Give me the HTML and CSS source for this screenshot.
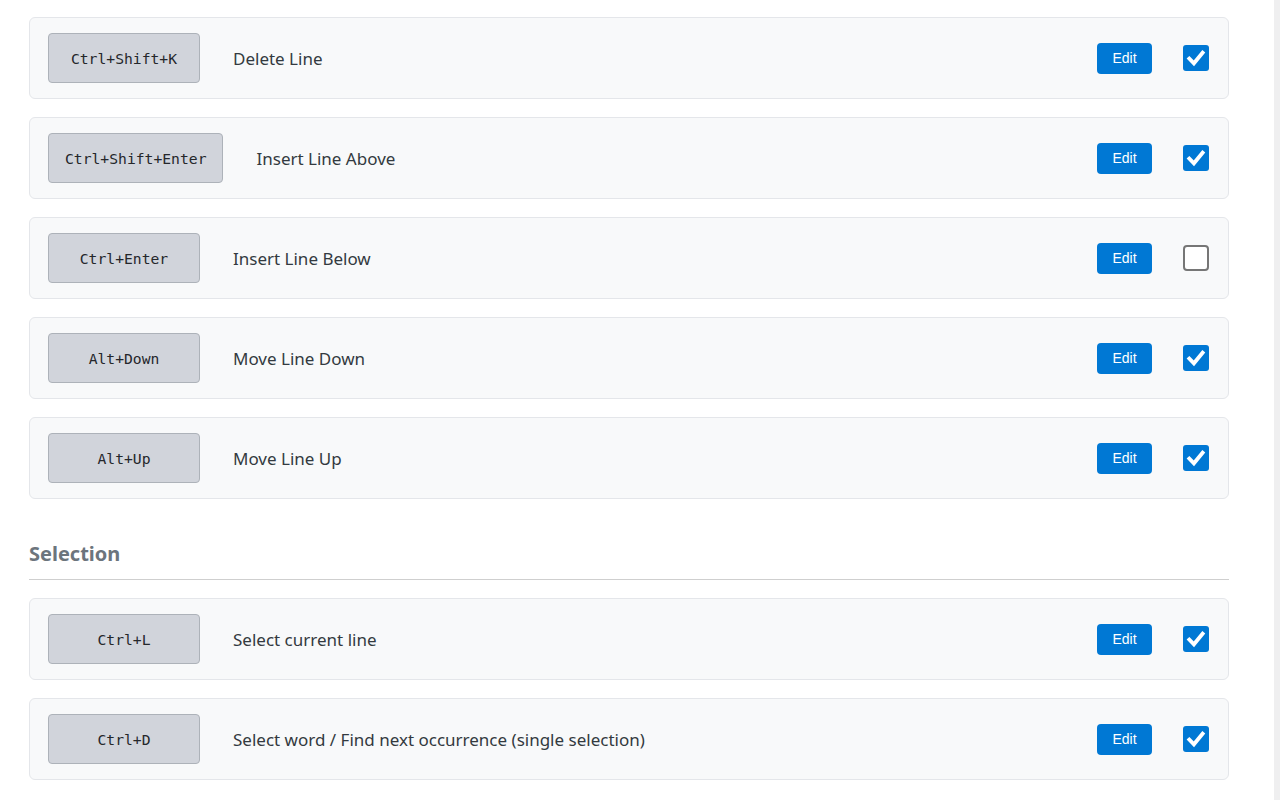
FILE: index.html
```html
<!DOCTYPE html>
<html lang="en">
<head>
<meta charset="utf-8">
<title>Keyboard Shortcuts</title>
<link rel="stylesheet" href="styles.css">
</head>
<body>
<div class="page">
  <main class="content">
    <div class="row">
      <kbd class="key">Ctrl+Shift+K</kbd>
      <span class="label">Delete Line</span>
      <button class="edit">Edit</button>
      <span class="check on"><svg viewBox="0 0 26 26"><path d="M6.3 13.6l4.6 4.7 8.7-10.6" fill="none" stroke="#fff" stroke-width="3.8" stroke-linecap="square" stroke-linejoin="miter"/></svg></span>
    </div>
    <div class="row">
      <kbd class="key">Ctrl+Shift+Enter</kbd>
      <span class="label">Insert Line Above</span>
      <button class="edit">Edit</button>
      <span class="check on"><svg viewBox="0 0 26 26"><path d="M6.3 13.6l4.6 4.7 8.7-10.6" fill="none" stroke="#fff" stroke-width="3.8" stroke-linecap="square" stroke-linejoin="miter"/></svg></span>
    </div>
    <div class="row">
      <kbd class="key">Ctrl+Enter</kbd>
      <span class="label">Insert Line Below</span>
      <button class="edit">Edit</button>
      <span class="check"></span>
    </div>
    <div class="row">
      <kbd class="key">Alt+Down</kbd>
      <span class="label">Move Line Down</span>
      <button class="edit">Edit</button>
      <span class="check on"><svg viewBox="0 0 26 26"><path d="M6.3 13.6l4.6 4.7 8.7-10.6" fill="none" stroke="#fff" stroke-width="3.8" stroke-linecap="square" stroke-linejoin="miter"/></svg></span>
    </div>
    <div class="row">
      <kbd class="key">Alt+Up</kbd>
      <span class="label">Move Line Up</span>
      <button class="edit">Edit</button>
      <span class="check on"><svg viewBox="0 0 26 26"><path d="M6.3 13.6l4.6 4.7 8.7-10.6" fill="none" stroke="#fff" stroke-width="3.8" stroke-linecap="square" stroke-linejoin="miter"/></svg></span>
    </div>

    <h3 class="section">Selection</h3>

    <div class="row">
      <kbd class="key">Ctrl+L</kbd>
      <span class="label">Select current line</span>
      <button class="edit">Edit</button>
      <span class="check on"><svg viewBox="0 0 26 26"><path d="M6.3 13.6l4.6 4.7 8.7-10.6" fill="none" stroke="#fff" stroke-width="3.8" stroke-linecap="square" stroke-linejoin="miter"/></svg></span>
    </div>
    <div class="row">
      <kbd class="key">Ctrl+D</kbd>
      <span class="label">Select word / Find next occurrence (single selection)</span>
      <button class="edit">Edit</button>
      <span class="check on"><svg viewBox="0 0 26 26"><path d="M6.3 13.6l4.6 4.7 8.7-10.6" fill="none" stroke="#fff" stroke-width="3.8" stroke-linecap="square" stroke-linejoin="miter"/></svg></span>
    </div>
  </main>
  <div class="scrolltrack"></div>
</div>
</body>
</html>
```

FILE: styles.css
```css
html, body {
  margin: 0;
  padding: 0;
  height: 100%;
  overflow: hidden;
  background: #ffffff;
}

.page {
  display: flex;
  height: 800px;
}

.content {
  flex: 1;
  padding: 17px 0 0 29px;
  font-family: "Noto Sans", "Open Sans", sans-serif;
  color: #333333;
}

.row {
  box-sizing: border-box;
  width: 1200px;
  height: 82px;
  margin-bottom: 18px;
  display: flex;
  align-items: center;
  padding: 0 19px 0 18px;
  background: #f8f9fa;
  border: 1px solid #e4e6ea;
  border-radius: 6px;
}

.key {
  box-sizing: border-box;
  min-width: 152px;
  height: 50px;
  padding: 0 16px;
  display: inline-flex;
  align-items: center;
  justify-content: center;
  background: #d1d4db;
  border: 1px solid #adb2b9;
  border-radius: 4px;
  font-family: "DejaVu Sans Mono", "Liberation Mono", monospace;
  font-size: 14.7px;
  color: #25272b;
  margin-right: 33px;
}

.label {
  flex: 1;
  font-size: 17px;
  color: #333a40;
}

.edit {
  box-sizing: border-box;
  width: 55px;
  height: 31px;
  padding: 0;
  border: none;
  border-radius: 4px;
  background: #0078d4;
  color: #ffffff;
  font-family: "Liberation Sans", Arial, sans-serif;
  font-size: 14px;
  margin-right: 31px;
}

.check {
  box-sizing: border-box;
  width: 26px;
  height: 26px;
  border: 2px solid #767676;
  border-radius: 4px;
  background: #ffffff;
  display: inline-flex;
}

.check.on {
  border: none;
  background: #0078d4;
  border-radius: 3px;
}

.check svg {
  width: 26px;
  height: 26px;
  display: block;
}

.section {
  width: 1200px;
  margin: 40px 0 18px;
  padding: 0 0 10px;
  line-height: 30px;
  font-size: 20px;
  font-weight: 700;
  color: #6c757d;
  border-bottom: 1px solid #cfcfcf;
  font-family: "Noto Sans", "Open Sans", sans-serif;
}

.scrolltrack {
  width: 6px;
  flex: none;
  background: #efeff0;
}
```
